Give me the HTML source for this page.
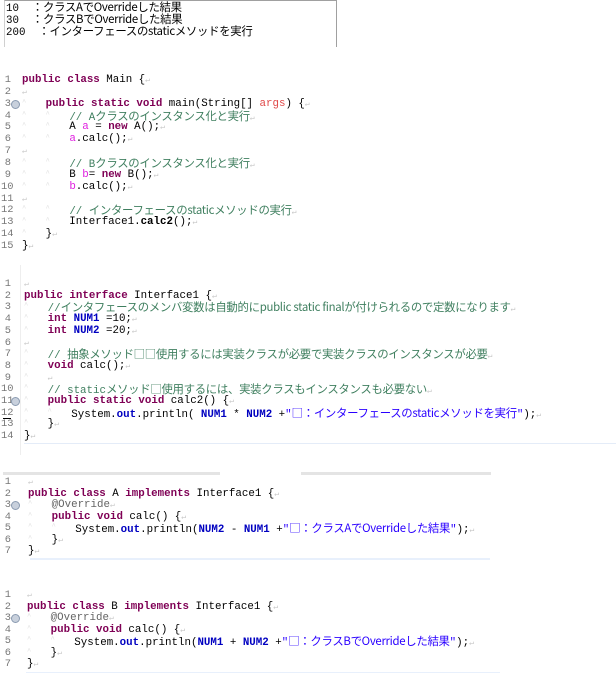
<!DOCTYPE html>
<html><head><meta charset="utf-8"><style>
body{margin:0;width:616px;height:673px;background:#fff;position:relative;overflow:hidden;font-family:"Liberation Mono","Noto Sans CJK JP",monospace;font-size:10.8px;color:#000}
.l{position:absolute;white-space:pre;height:12px;line-height:12px}
i{font-style:normal;font-family:"Noto Sans CJK JP",sans-serif;font-size:11.4px;letter-spacing:-0.3px}
.n{position:absolute;width:10px;text-align:right;color:#787878;font-size:10.4px;line-height:12px;height:12px}
.k{color:#7f0055;font-weight:bold}
.c{color:#3f7f5f}
.s{color:#2a00ff}
.f{color:#0000c0;font-weight:bold}
.v{color:#e020e0}
.r{color:#e04848}
.a{color:#646464}
.m{color:#c8c8c8;font-size:8px}
.t{color:#e0e0e0;font-size:7px;vertical-align:top;line-height:10px}
.fold{position:absolute;width:7px;height:7px;border-radius:50%;background:#c8d0dc;border:1px solid #8a9ab0}
</style></head><body>
<div style="position:absolute;left:4px;top:0;width:331px;height:46px;border-top:1px solid #a0a0a0;border-right:1px solid #a0a0a0;border-left:1px solid #d0d0d0"></div>
<div class="l" style="left:6px;top:1px">10  <i>：クラスAでOverrideした結果</i></div>
<div class="l" style="left:6px;top:13px">30  <i>：クラスBでOverrideした結果</i></div>
<div class="l" style="left:6px;top:25px">200  <i>：インターフェースのstaticメソッドを実行</i></div>

<script>
function blk(top,pitch,numX,codeX,lines,folds){
 let h='';
 lines.forEach((t,i)=>{
  const y=top+i*pitch;
  h+=`<div class="n" style="left:${numX}px;top:${y}px">${i+1}</div>`;
  h+=`<div class="l" style="left:${codeX}px;top:${y}px">${t}</div>`;
 });
 (folds||[]).forEach(f=>{h+=`<div class="fold" style="left:${numX+10}px;top:${top+(f-1)*pitch+2}px"></div>`});
 document.write(h);
}
const R='<span class="m">↵</span>';
const T='<span class="t">^</span>   ';
blk(74,11.86,1,22,[
'<span class="k">public</span> <span class="k">class</span> Main {'+R,
R,
T+'<span class="k">public</span> <span class="k">static</span> <span class="k">void</span> main(String[] <span class="r">args</span>) {'+R,
T+T+'<span class="c">// A<i>クラスのインスタンス化と実行</i></span>'+R,
T+T+'A <span class="v">a</span> = <span class="k">new</span> A();'+R,
T+T+'<span class="v">a</span>.calc();'+R,
R,
T+T+'<span class="c">// B<i>クラスのインスタンス化と実行</i></span>'+R,
T+T+'B <span class="v">b</span>= <span class="k">new</span> B();'+R,
T+T+'<span class="v">b</span>.calc();'+R,
R,
T+T+'<span class="c">// <i>インターフェースのstaticメソッドの実行</i></span>'+R,
T+T+'Interface1.<b>calc2</b>();'+R,
T+'}'+R,
'}'+R],[3]);
blk(278,11.7,1,24,[
R,
'<span class="k">public</span> <span class="k">interface</span> Interface1 {'+R,
T+'<span class="c">//<i>インタフェースのメンバ変数は自動的にpublic static finalが付けられるので定数になります</i></span>'+R,
T+'<span class="k">int</span> <span class="f">NUM1</span> =10;'+R,
T+'<span class="k">int</span> <span class="f">NUM2</span> =20;'+R,
R,
T+'<span class="c">// <i>抽象メソッド□□使用するには実装クラスが必要で実装クラスのインスタンスが必要</i></span>'+R,
T+'<span class="k">void</span> calc();'+R,
T+R,
T+'<span class="c">// static<i>メソッド□使用するには、実装クラスもインスタンスも必要ない</i></span>'+R,
T+'<span class="k">public</span> <span class="k">static</span> <span class="k">void</span> calc2() {'+R,
T+T+'System.<span class="f">out</span>.println( <span class="f">NUM1</span> * <span class="f">NUM2</span> +<span class="s">"<i>□：インターフェースのstaticメソッドを実行</i>"</span>);'+R,
T+'}'+R,
'}'+R],[11]);
blk(476,11.5,1,28,[
R,
'<span class="k">public</span> <span class="k">class</span> A <span class="k">implements</span> Interface1 {'+R,
T+'<span class="a">@Override</span>'+R,
T+'<span class="k">public</span> <span class="k">void</span> calc() {'+R,
T+T+'System.<span class="f">out</span>.println(<span class="f">NUM2</span> - <span class="f">NUM1</span> +<span class="s">"<i>□：クラスAでOverrideした結果</i>"</span>);'+R,
T+'}'+R,
'}'+R],[3]);
blk(589,11.5,1,27,[
R,
'<span class="k">public</span> <span class="k">class</span> B <span class="k">implements</span> Interface1 {'+R,
T+'<span class="a">@Override</span>'+R,
T+'<span class="k">public</span> <span class="k">void</span> calc() {'+R,
T+T+'System.<span class="f">out</span>.println(<span class="f">NUM1</span> + <span class="f">NUM2</span> +<span class="s">"<i>□：クラスBでOverrideした結果</i>"</span>);'+R,
T+'}'+R,
'}'+R],[3]);
</script>
<div style="position:absolute;left:20px;top:265px;width:1px;height:190px;background:#eee"></div>
<div style="position:absolute;left:24px;top:443px;width:592px;height:1px;background:#e4ecf8"></div>
<div style="position:absolute;left:3px;top:472px;width:217px;height:3px;background:#e4e4e4"></div>
<div style="position:absolute;left:301px;top:472px;width:190px;height:3px;background:#e4e4e4"></div>
<div style="position:absolute;left:30px;top:558px;width:460px;height:2px;background:#e8f0fc"></div>
<div style="position:absolute;left:26px;top:672px;width:474px;height:1px;background:#e8f0fc"></div>
<div style="position:absolute;left:3px;top:418px;width:8px;height:1px;background:#000"></div>
</body></html>
